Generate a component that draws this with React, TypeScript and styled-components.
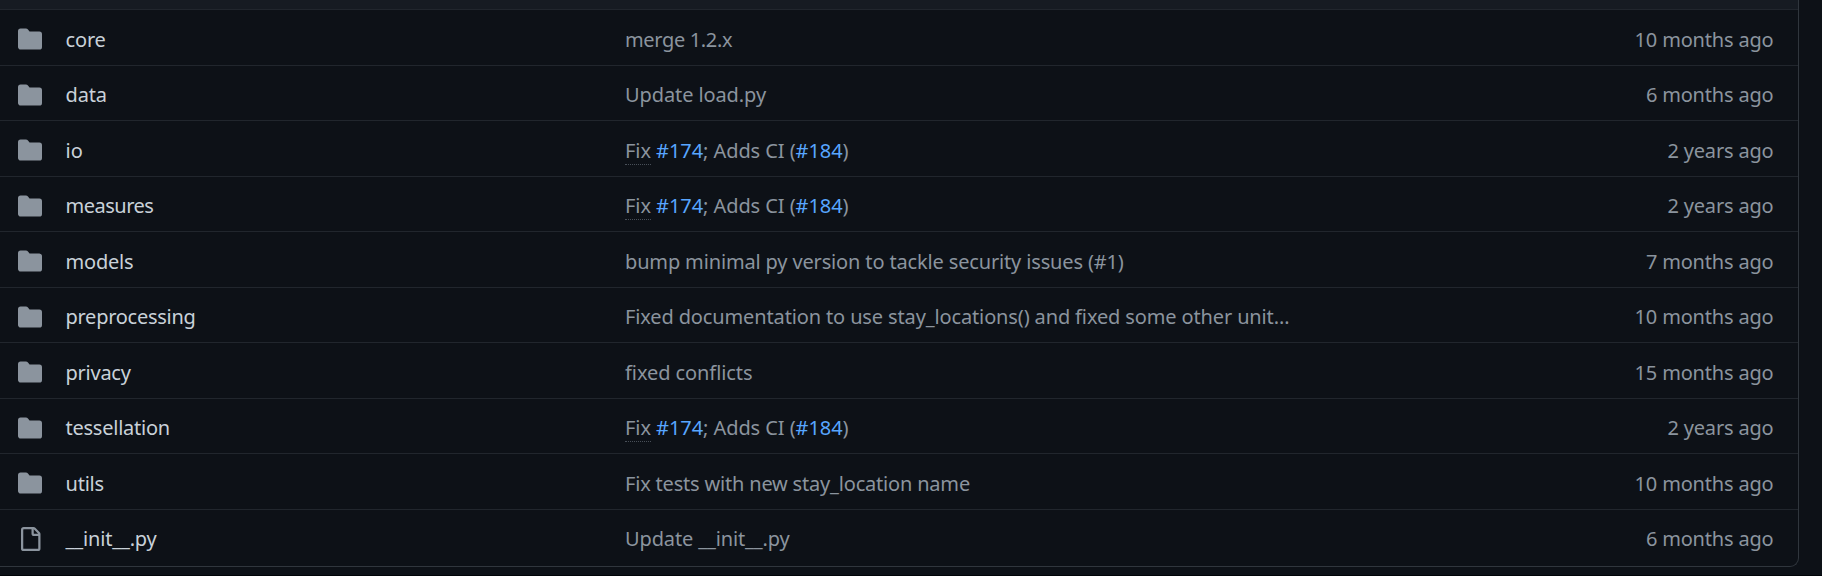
import React from "react";
import styled, { createGlobalStyle } from "styled-components";

const GlobalStyle = createGlobalStyle`
  *, *::before, *::after { box-sizing: border-box; }
  body {
    margin: 0;
    background: #0d1117;
    color: #c9d1d9;
    font: 20px/31.5px "Noto Sans", "Open Sans", sans-serif;
    overflow: hidden;
  }
`;

const Page = styled.div`
  height: 576px;
  padding-right: 23px;
  border-bottom: 1px solid #010409;
`;

const FileBox = styled.div`
  height: 567px;
  border: solid #30363d;
  border-width: 0 1px 1px 0;
  border-bottom-right-radius: 9px;
  overflow: hidden;
`;

const BoxHeader = styled.div`
  height: 9px;
  background: #161b22;
`;

const Row = styled.div`
  display: flex;
  align-items: center;
  height: 55.5px;
  padding: 4px 24.5px 0 18px;
  border-top: 1px solid #21262d;
`;

const IconCell = styled.div`
  display: flex;
  flex: none;
  width: 24px;
  margin-right: 23.5px;
  color: #8b949e;
`;

const Name = styled.div<{ $spacing: number }>`
  flex: none;
  width: 559.5px;
  letter-spacing: ${(p) => p.$spacing}px;
  white-space: nowrap;
`;

const Message = styled.div<{ $spacing: number }>`
  flex: 1;
  color: #8b949e;
  letter-spacing: ${(p) => p.$spacing}px;
  white-space: nowrap;
`;

const Age = styled.div`
  flex: none;
  color: #8b949e;
  letter-spacing: -0.18px;
  white-space: nowrap;
`;

const Keyword = styled.span`
  border-bottom: 1px dotted #484f58;
`;

const IssueLink = styled.span`
  color: #58a6ff;
`;

const FolderIcon = () => (
  <svg width="24" height="24" viewBox="0 0 16 16" fill="currentColor">
    <path d="M1.75 1A1.75 1.75 0 000 2.75v10.5C0 14.216.784 15 1.75 15h12.5A1.75 1.75 0 0016 13.25v-8.5A1.75 1.75 0 0014.25 3h-6.5a.25.25 0 01-.2-.1l-.9-1.2c-.33-.44-.85-.7-1.4-.7h-3.5z" />
  </svg>
);

const DocumentIcon = () => (
  <svg width="24" height="24" viewBox="0 0 16 16" fill="currentColor">
    <path
      fillRule="evenodd"
      d="M3.75 1.5a.25.25 0 00-.25.25v12.5c0 .138.112.25.25.25h9.5a.25.25 0 00.25-.25V6h-2.75A1.75 1.75 0 019 4.25V1.5H3.75zm6.75.062V4.25c0 .138.112.25.25.25h2.688a.252.252 0 00-.011-.013l-2.914-2.914a.272.272 0 00-.013-.011zM2 1.75C2 .784 2.784 0 3.75 0h6.586c.464 0 .909.184 1.237.513l2.914 2.914c.329.328.513.773.513 1.237v9.586A1.75 1.75 0 0113.25 16h-9.5A1.75 1.75 0 012 14.25V1.75z"
    />
  </svg>
);

const ciFix = (
  <>
    <Keyword>Fix</Keyword> <IssueLink>#174</IssueLink>; Adds CI (<IssueLink>#184</IssueLink>)
  </>
);

type Entry = {
  name: string;
  nameSpacing: number;
  message: React.ReactNode;
  messageSpacing: number;
  age: string;
  file?: boolean;
};

const entries: Entry[] = [
  { name: "core", nameSpacing: -0.15, message: "merge 1.2.x", messageSpacing: -0.35, age: "10 months ago" },
  { name: "data", nameSpacing: -0.15, message: "Update load.py", messageSpacing: -0.1, age: "6 months ago" },
  { name: "io", nameSpacing: 0, message: ciFix, messageSpacing: -0.07, age: "2 years ago" },
  { name: "measures", nameSpacing: -0.5, message: ciFix, messageSpacing: -0.07, age: "2 years ago" },
  {
    name: "models",
    nameSpacing: -0.2,
    message: "bump minimal py version to tackle security issues (#1)",
    messageSpacing: -0.15,
    age: "7 months ago",
  },
  {
    name: "preprocessing",
    nameSpacing: -0.27,
    message: "Fixed documentation to use stay_locations() and fixed some other unit…",
    messageSpacing: -0.133,
    age: "10 months ago",
  },
  { name: "privacy", nameSpacing: -0.25, message: "fixed conflicts", messageSpacing: -0.08, age: "15 months ago" },
  { name: "tessellation", nameSpacing: -0.24, message: ciFix, messageSpacing: -0.07, age: "2 years ago" },
  {
    name: "utils",
    nameSpacing: -0.22,
    message: "Fix tests with new stay_location name",
    messageSpacing: -0.19,
    age: "10 months ago",
  },
  {
    name: "__init__.py",
    nameSpacing: -0.16,
    message: "Update __init__.py",
    messageSpacing: -0.13,
    age: "6 months ago",
    file: true,
  },
];

export default function App() {
  return (
    <Page>
      <GlobalStyle />
      <FileBox>
        <BoxHeader />
        {entries.map((e) => (
          <Row key={e.name}>
            <IconCell>{e.file ? <DocumentIcon /> : <FolderIcon />}</IconCell>
            <Name $spacing={e.nameSpacing}>{e.name}</Name>
            <Message $spacing={e.messageSpacing}>{e.message}</Message>
            <Age>{e.age}</Age>
          </Row>
        ))}
      </FileBox>
    </Page>
  );
}
